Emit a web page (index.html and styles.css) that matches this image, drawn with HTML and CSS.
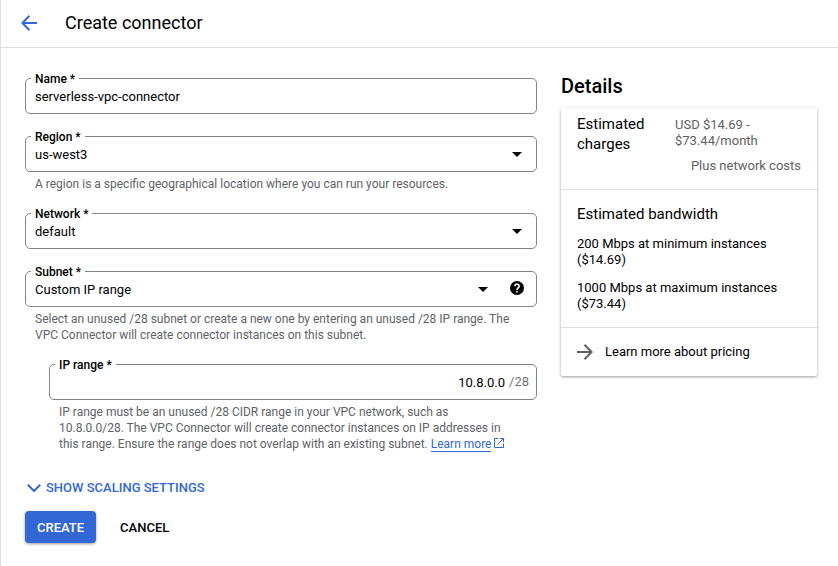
FILE: index.html
```html
<!DOCTYPE html>
<html lang="en">
<head>
<meta charset="utf-8">
<meta name="viewport" content="width=device-width, initial-scale=1">
<title>Create connector</title>
<link rel="stylesheet" href="styles.css">
</head>
<body>
<header class="topbar">
  <a class="back" href="#" aria-label="Back">
    <svg width="16" height="16" viewBox="0 0 16 16" fill="none" stroke="currentColor" stroke-width="2"><path d="M8.5 .8 1.4 8l7.1 7.2M1.5 8H16"/></svg>
  </a>
  <h1 class="title">Create connector</h1>
</header>
<main class="layout">
  <form class="form">
    <div class="field">
      <div class="box">
        <label class="label" for="name">Name *</label>
        <input class="control" id="name" type="text" value="serverless-vpc-connector">
      </div>
    </div>
    <div class="field">
      <div class="box">
        <label class="label" for="region">Region *</label>
        <div class="picker">
          <select class="control" id="region"><option>us-west3</option></select>
          <svg class="caret" width="10" height="5" viewBox="0 0 10 5"><path d="M0 0h10L5 5z"/></svg>
        </div>
      </div>
      <p class="hint">A region is a specific geographical location where you can run your resources.</p>
    </div>
    <div class="field">
      <div class="box">
        <label class="label" for="network">Network *</label>
        <div class="picker">
          <select class="control" id="network"><option>default</option></select>
          <svg class="caret" width="10" height="5" viewBox="0 0 10 5"><path d="M0 0h10L5 5z"/></svg>
        </div>
      </div>
    </div>
    <div class="field">
      <div class="box">
        <label class="label" for="subnet">Subnet *</label>
        <div class="picker">
          <select class="control" id="subnet"><option>Custom IP range</option></select>
          <svg class="caret" width="10" height="5" viewBox="0 0 10 5"><path d="M0 0h10L5 5z"/></svg>
        </div>
        <button class="help" type="button" aria-label="Help">
          <svg width="14" height="14" viewBox="0 0 14 14"><circle cx="7" cy="7" r="7"/><path d="M4.9 5.3a2.1 2.1 0 1 1 3.5 1.4C7.600 7.400 7 7.700 7 9" fill="none" stroke="#fff" stroke-width="1.600"/><path d="M6.200 10h1.600v1.600H6.200z" fill="#fff"/></svg>
        </button>
      </div>
      <p class="hint">Select an unused /28 subnet or create a new one by entering an unused /28 IP range. The VPC Connector will create connector instances on this subnet.</p>
    </div>
    <div class="field nested">
      <div class="box">
        <label class="label" for="range">IP range *</label>
        <input class="control range" id="range" type="text" value="10.8.0.0">
        <span class="suffix">/28</span>
      </div>
      <p class="hint">IP range must be an unused /28 CIDR range in your VPC network, such as 10.8.0.0/28. The VPC Connector will create connector instances on IP addresses in this range. Ensure the range does not overlap with an existing subnet. <a class="link" href="#">Learn more</a> <svg class="external" width="10" height="10" viewBox="0 0 10 10" fill="none" stroke="currentColor"><path d="M4.500 .5h-4v9h9v-4M6 .5h3.500V4M9.500 .5 3.500 6.500"/></svg></p>
    </div>
    <button class="expand" type="button">
      <svg width="14" height="8" viewBox="0 0 14 8" fill="none" stroke="currentColor" stroke-width="2"><path d="M.8 .8 7 7 13.200 .8"/></svg>
      SHOW SCALING SETTINGS
    </button>
    <div class="actions">
      <button class="button primary" type="submit">CREATE</button>
      <button class="button" type="button">CANCEL</button>
    </div>
  </form>
  <aside class="details">
    <h2 class="details-title">Details</h2>
    <div class="card">
      <section class="charges">
        <h3 class="card-title">Estimated charges</h3>
        <div class="amounts">
          <p class="amount">USD $14.69 - $73.44/month</p>
          <p class="extra">Plus network costs</p>
        </div>
      </section>
      <section class="bandwidth">
        <h3 class="card-title">Estimated bandwidth</h3>
        <p>200 Mbps at minimum instances ($14.69)</p>
        <p>1000 Mbps at maximum instances ($73.44)</p>
      </section>
      <a class="pricing" href="#">
        <svg width="16" height="16" viewBox="0 0 16 16" fill="none" stroke="#616161" stroke-width="2"><path d="M7.500 .8 14.600 8l-7.100 7.200M0 8h14.500"/></svg>
        Learn more about pricing
      </a>
    </div>
  </aside>
</main>
</body>
</html>
```
FILE: styles.css
```css
* {
  box-sizing: border-box;
}

body {
  margin: 0;
  min-height: 100vh;
  border-left: 1px solid #e0e0e0;
  background: #fff;
  color: #000;
  font: 13px/16px Roboto, "Liberation Sans", sans-serif;
}

h1, h2, h3, p {
  margin: 0;
  font-weight: 400;
}

button, input, select {
  font: inherit;
  color: inherit;
  margin: 0;
  padding: 0;
  border: 0;
  background: none;
}

svg {
  display: block;
  flex: none;
}

.topbar {
  display: flex;
  align-items: center;
  gap: 28px;
  padding: 11px 20px 12px;
  border-bottom: 1px solid #e0e0e0;
}

.back {
  color: #3367d6;
}

.title {
  font-size: 18px;
  line-height: 24px;
}

.layout {
  display: grid;
  grid-template-columns: minmax(0, 1fr) 256px;
  align-items: start;
  gap: 24px;
  padding: 30px 21px 22px 24px;
}

.form {
  display: flex;
  flex-direction: column;
  gap: 22px;
}

.nested {
  margin-left: 24px;
}

.box {
  position: relative;
  display: flex;
  align-items: center;
  height: 36px;
  border: 1px solid #80868b;
  border-radius: 5px;
}

.label {
  position: absolute;
  z-index: 1;
  top: -8px;
  left: 5px;
  padding: 0 4px;
  background: #fff;
  font-size: 12px;
  font-weight: 500;
}

.control {
  display: block;
  flex: 1;
  width: 100%;
  min-width: 0;
  height: 34px;
  padding: 0 9px;
  border-radius: 5px;
  appearance: none;
}

select.control {
  padding-top: 2px;
}

.range {
  padding-right: 4px;
  text-align: right;
}

.suffix {
  padding-right: 7px;
  color: #757575;
}

.picker {
  position: relative;
  flex: 1;
}

.caret {
  position: absolute;
  top: 15px;
  right: 14px;
  pointer-events: none;
}

.help {
  flex: none;
  padding: 0 12px 2px 8px;
}

.hint {
  margin: 4px 0 -1px;
  padding: 0 26px 0 10px;
  color: #5f6368;
  font-size: 12px;
}

.link {
  border-bottom: 1px solid currentColor;
  color: #3367d6;
  text-decoration: none;
  white-space: nowrap;
}

.external {
  display: inline-block;
  color: #3367d6;
}

.expand {
  display: flex;
  align-items: center;
  align-self: flex-start;
  gap: 5px;
  margin-top: 7px;
  padding-left: 2px;
  color: #3367d6;
  font-weight: 500;
}

.actions {
  display: flex;
  gap: 12px;
  margin-top: -7px;
}

.button {
  height: 32px;
  padding: 2px 12px 0;
  border-radius: 4px;
  font-weight: 500;
}

.primary {
  background: #3367d6;
  color: #fff;
  box-shadow: 0 1px 3px rgba(0, 0, 0, 0.4);
}

.details-title {
  margin: -4px 0 10px;
  font-size: 20px;
  font-weight: 500;
  line-height: 24px;
}

.card {
  border-radius: 2px;
  box-shadow: 0 1px 3px rgba(0, 0, 0, 0.4);
}

.charges, .bandwidth {
  padding: 14px 16px 15px;
  border-bottom: 1px solid #e0e0e0;
}

.charges {
  display: flex;
  justify-content: space-between;
  padding-top: 6px;
  color: #616161;
}

.card-title {
  color: #000;
  font-size: 15px;
  line-height: 20px;
}

.charges .card-title {
  width: 80px;
}

.amounts {
  width: 126px;
  padding-top: 3px;
}

.extra {
  margin-top: 9px;
  text-align: right;
}

.bandwidth {
  display: grid;
  gap: 12px;
}

.pricing {
  display: flex;
  align-items: center;
  gap: 12px;
  padding: 16px;
  color: #000;
  text-decoration: none;
}
```
